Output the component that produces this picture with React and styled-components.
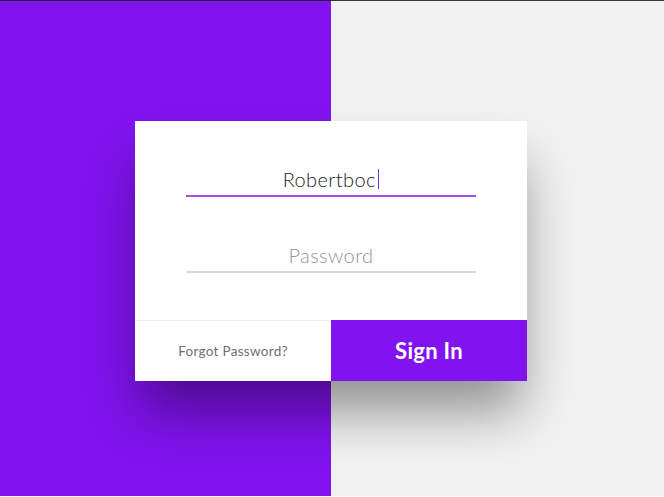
import React from 'react';
import styled, { createGlobalStyle } from 'styled-components';

const GlobalStyle = createGlobalStyle`
  html, body {
    margin: 0;
    padding: 0;
  }
  body {
    font-family: Lato, "Open Sans", sans-serif;
  }
`;

const Page = styled.div`
  min-height: 496px;
  border-top: 1px solid rgba(20, 20, 30, 0.85);
  background: linear-gradient(to right, #8013ee 331px, #f1f1f1 331px);
  padding: 120px 0 0 135px;
  box-sizing: border-box;
`;

const Card = styled.div`
  width: 392px;
  background: #fff;
  box-shadow: 0 36px 50px -6px rgba(0, 0, 0, 0.4);
`;

const Fields = styled.div`
  display: flex;
  flex-direction: column;
  gap: 46px;
  padding: 46px 51px 47px;
`;

const Field = styled.div`
  height: 24px;
  padding-bottom: 4px;
  border-bottom: ${(p) => (p.$active ? '2px solid #9b55dc' : '2px solid #d9d9d9')};
  display: flex;
  justify-content: center;
  align-items: center;
  font-size: 20px;
  line-height: 24px;
  letter-spacing: 0.4px;
  color: ${(p) => (p.$placeholder ? '#929292' : '#222')};
  font-weight: 300;
`;

const Caret = styled.span`
  display: inline-block;
  width: 1.5px;
  height: 20px;
  margin-left: 2px;
  background: #8a2be2;
`;

const Footer = styled.div`
  display: grid;
  grid-template-columns: 196px 196px;
  height: 60px;
  border-top: 1px solid #f0f0f0;
`;

const Forgot = styled.a`
  display: flex;
  align-items: center;
  justify-content: center;
  font-size: 13.5px;
  letter-spacing: 0.3px;
  color: #707070;
  text-decoration: none;
  cursor: pointer;
`;

const SignIn = styled.button`
  border: none;
  margin-top: -1px;
  background: #8013ee;
  color: #fff;
  font-family: Lato, "Open Sans", sans-serif;
  font-size: 22px;
  letter-spacing: 0.3px;
  font-weight: 700;
  cursor: pointer;
`;

export default function App() {
  return (
    <>
      <GlobalStyle />
      <Page>
        <Card>
          <Fields>
            <Field $active>
              Robertboc
              <Caret />
            </Field>
            <Field $placeholder>Password</Field>
          </Fields>
          <Footer>
            <Forgot>Forgot Password?</Forgot>
            <SignIn>Sign In</SignIn>
          </Footer>
        </Card>
      </Page>
    </>
  );
}
